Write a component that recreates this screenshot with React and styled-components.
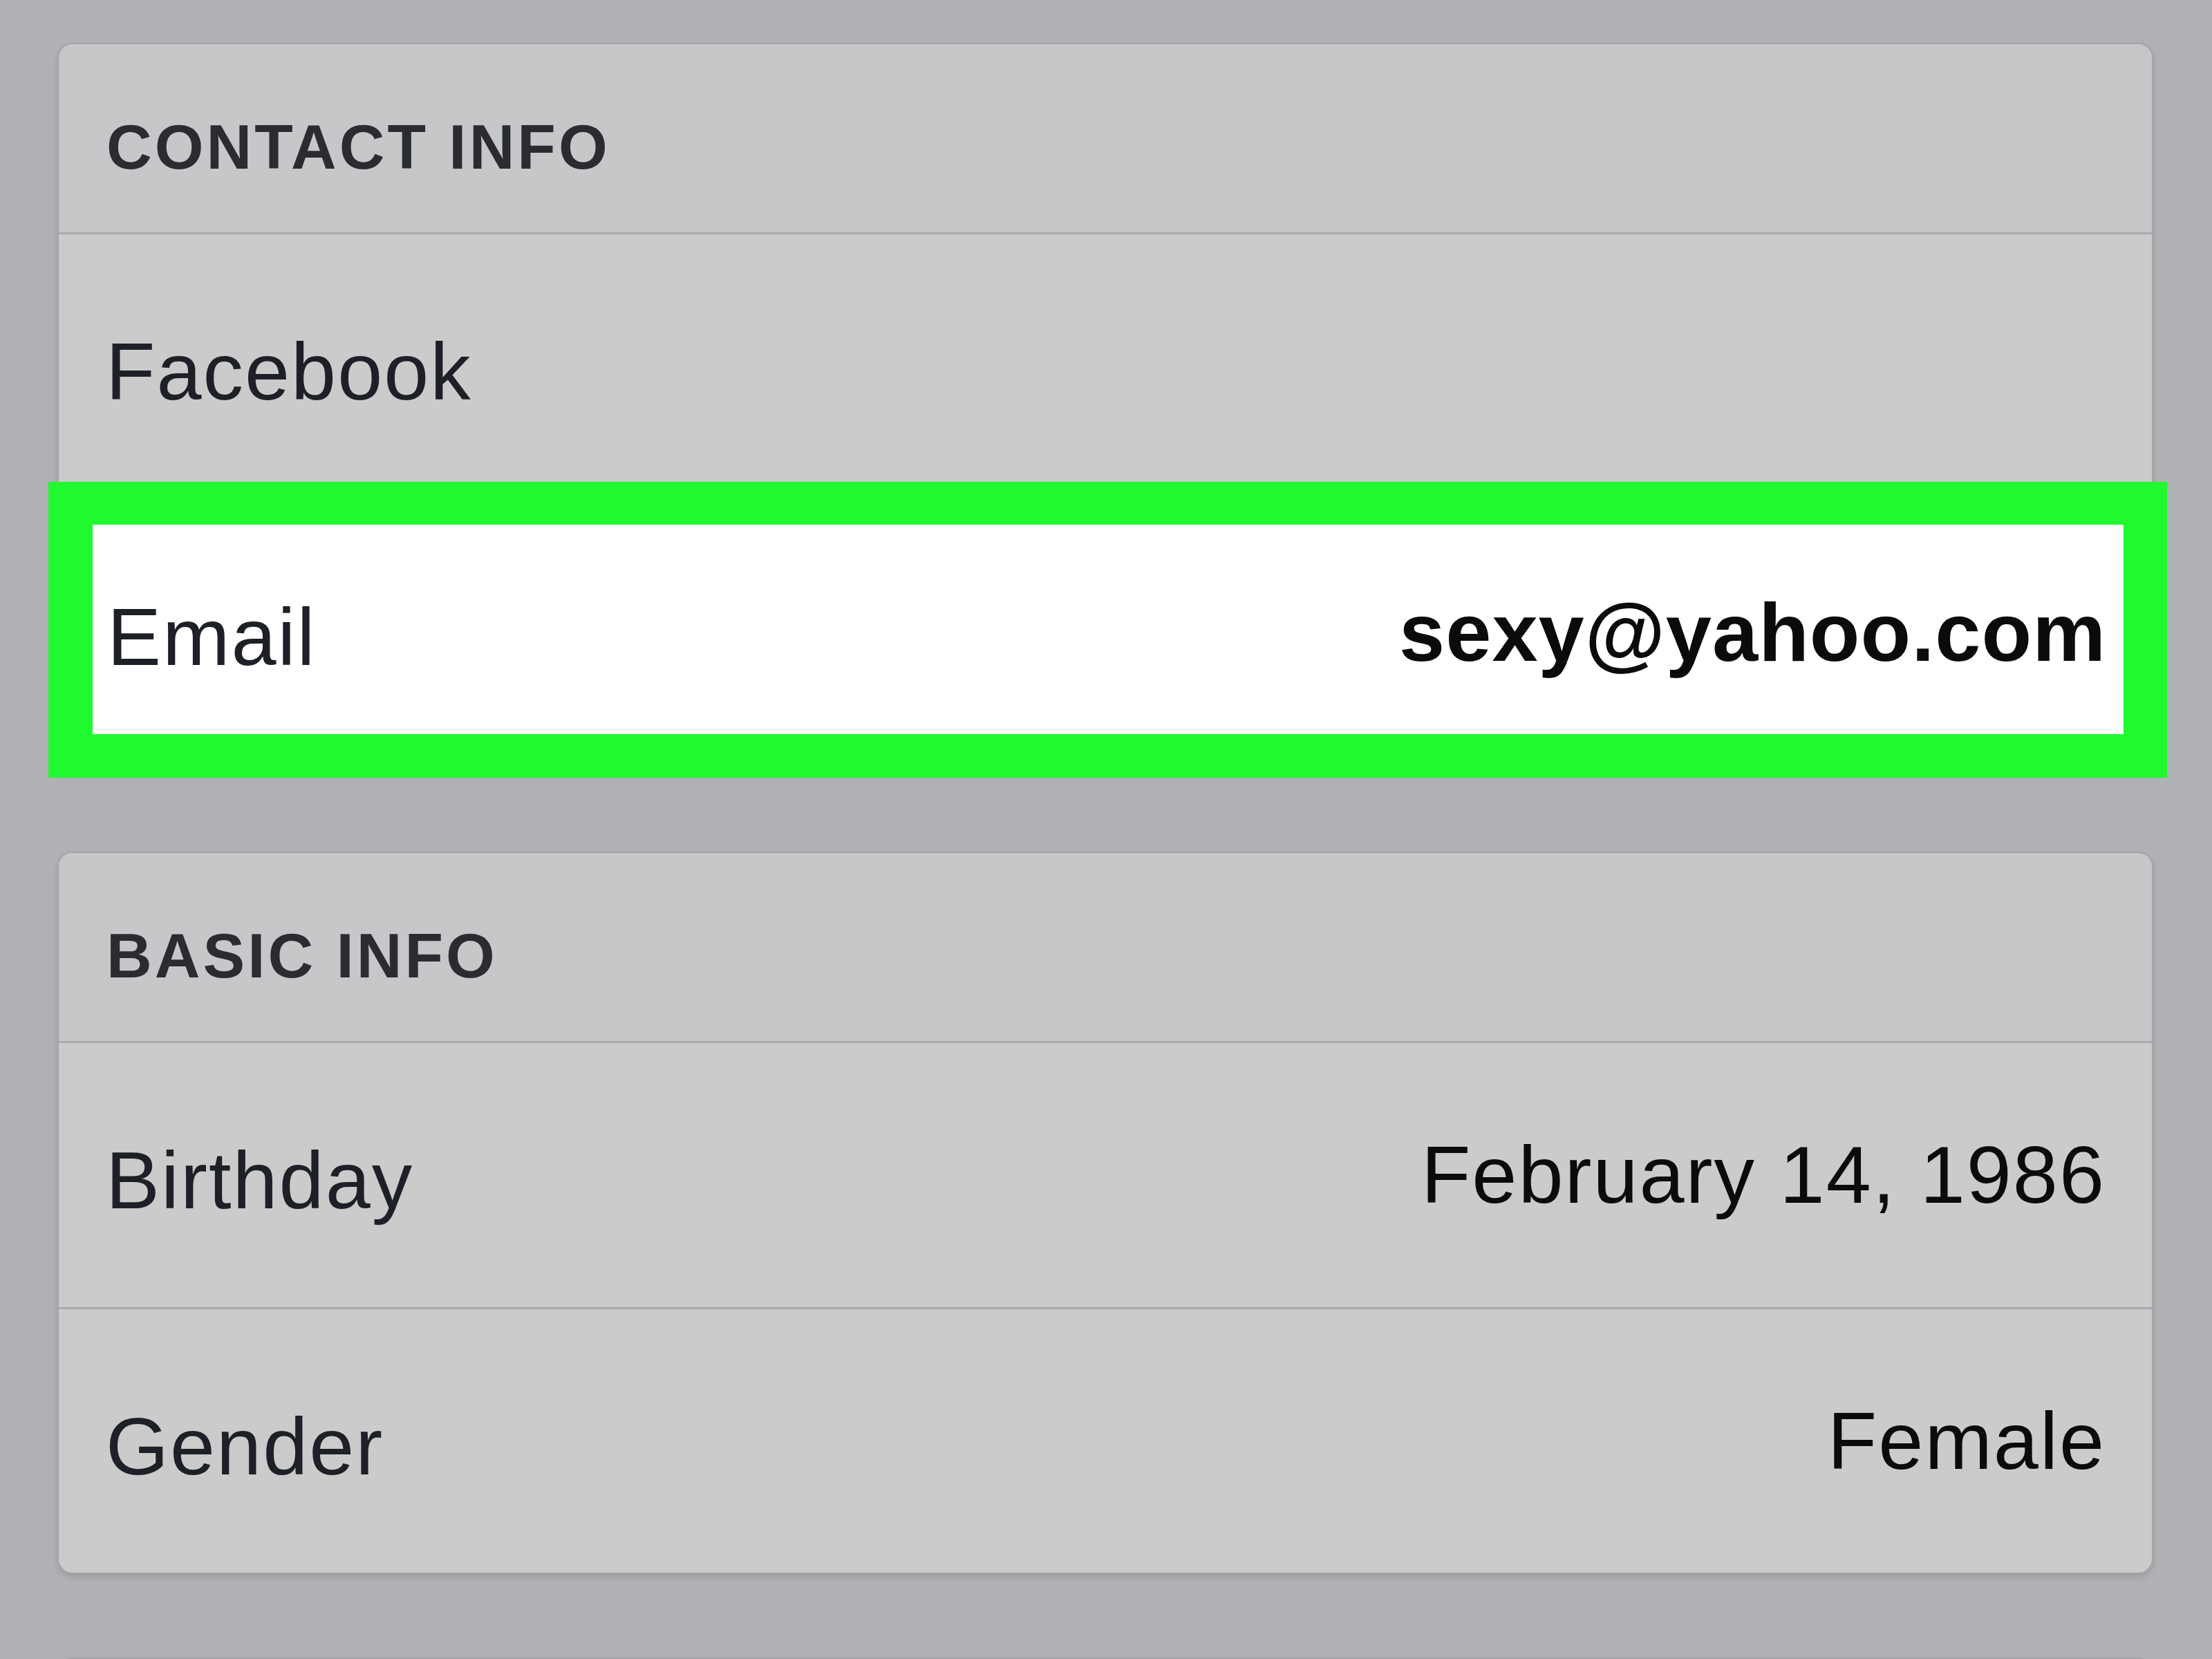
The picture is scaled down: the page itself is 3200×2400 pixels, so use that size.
import React from "react";
import styled, { createGlobalStyle } from "styled-components";

const GlobalStyle = createGlobalStyle`
  html, body {
    margin: 0;
    padding: 0;
    background: #b0b1b5;
  }
  body {
    font-family: "Liberation Sans", Arial, sans-serif;
    -webkit-font-smoothing: antialiased;
  }
`;

const sections = [
  {
    title: "CONTACT INFO",
    rows: [
      { label: "Facebook", value: "" },
      { label: "Email", value: "sexy@yahoo.com", highlighted: true },
    ],
  },
  {
    title: "BASIC INFO",
    rows: [
      { label: "Birthday", value: "February 14, 1986" },
      { label: "Gender", value: "Female" },
    ],
  },
  { title: "", rows: [] },
];

export default function App() {
  return (
    <>
      <GlobalStyle />
      <Screen>
        {sections.map((section, i) => (
          <Card key={i}>
            <Header>{section.title}</Header>
            {section.rows.map((row) =>
              row.highlighted ? (
                <HighlightFrame key={row.label}>
                  <Label>{row.label}</Label>
                  <Value $bold>{row.value}</Value>
                </HighlightFrame>
              ) : (
                <Row key={row.label}>
                  <Label>{row.label}</Label>
                  {row.value && <Value>{row.value}</Value>}
                </Row>
              )
            )}
          </Card>
        ))}
      </Screen>
    </>
  );
}

const Screen = styled.div`
  width: 3200px;
  height: 2400px;
  overflow: hidden;
  box-sizing: border-box;
  padding: 62px 85px 0 83px;
  display: flex;
  flex-direction: column;
  gap: 121px;
`;

const Card = styled.div`
  flex-shrink: 0;
  background: #cbcbcb;
  border: 2px solid #a3a4a7;
  border-radius: 22px;
  box-shadow: 0 5px 8px rgba(0, 0, 0, 0.1);
  display: flex;
  flex-direction: column;
`;

const Header = styled.div`
  box-sizing: border-box;
  height: 275px;
  padding: 103px 70px 0 69px;
  background: #c6c7c9;
  border-bottom: 3px solid #a9aaad;
  border-radius: 20px 20px 0 0;
  font-size: 91px;
  line-height: 1;
  font-weight: 700;
  letter-spacing: 4px;
  color: #2a2c31;
`;

const Row = styled.div`
  box-sizing: border-box;
  height: 385px;
  padding: 140px 67px 0 68px;
  display: flex;
  justify-content: space-between;
  align-items: flex-start;
  border-bottom: 3px solid #a9aaad;

  &:last-child {
    height: 381px;
    border-bottom: none;
  }
`;

const HighlightFrame = styled.div`
  box-sizing: border-box;
  height: 428px;
  margin: -27px -22px -16px -15px;
  padding: 104px 25px 0 21px;
  display: flex;
  justify-content: space-between;
  align-items: flex-start;
  background: #ffffff;
  border-style: solid;
  border-color: #1ff92e;
  border-width: 62px 63px 63px 64px;
  position: relative;
`;

const Label = styled.span`
  font-size: 117px;
  line-height: 1;
  letter-spacing: 2px;
  color: #1d2027;
`;

const Value = styled.span`
  margin-top: -8px;
  font-size: ${(p) => (p.$bold ? "119px" : "117px")};
  font-weight: ${(p) => (p.$bold ? 700 : 400)};
  letter-spacing: ${(p) => (p.$bold ? "1px" : "2px")};
  line-height: 1;
  color: #0b0b0c;
`;
